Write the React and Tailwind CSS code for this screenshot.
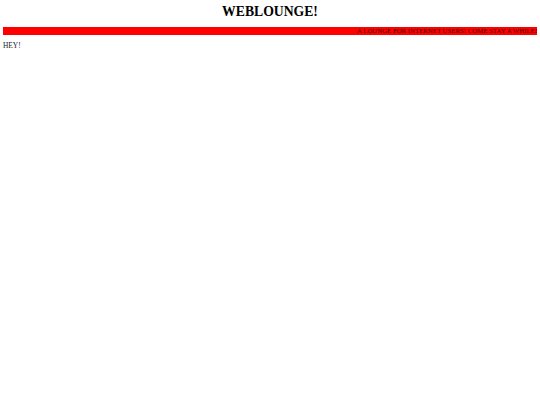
import React from "react";

const App = () => {
  return (
    <div className="min-h-screen bg-white px-[3px] text-black" style={{ fontFamily: '"Liberation Serif", "Times New Roman", serif' }}>
      {/* Header */}
      <h1 className="pt-[4px] text-center text-[13.7px] font-bold leading-[16px]">WEBLOUNGE!</h1>

      {/* Red banner */}
      <div className="mt-[7px] flex h-[8px] items-center justify-end bg-[#ff0000] text-[6.8px] leading-[8px] text-[#3a0000]">
        A LOUNGE FOR INTERNET USERS! COME STAY A WHILE!
      </div>

      <p className="mt-[6px] text-[7.4px] leading-[9px] text-[#222]">HEY!</p>
    </div>
  );
};

export default App;
